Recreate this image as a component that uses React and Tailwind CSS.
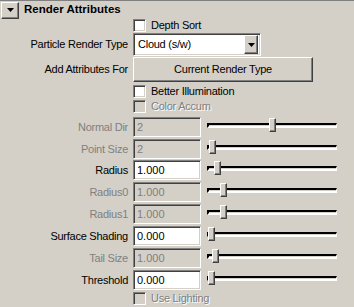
import React from "react";

const font = { fontFamily: '"Liberation Sans", Arial, sans-serif' };

function Sunken({ className = "", children }) {
  return (
    <div
      className={
        "box-border border border-t-[#808080] border-l-[#808080] border-b-white border-r-white shadow-[inset_1px_1px_0_#404040,inset_-1px_-1px_0_#d4d0c8] " +
        className
      }
    >
      {children}
    </div>
  );
}

function Raised({ className = "", children }) {
  return (
    <div
      className={
        "box-border border border-t-white border-l-white border-b-[#404040] border-r-[#404040] shadow-[inset_-1px_-1px_0_#808080,inset_1px_1px_0_#d4d0c8] bg-[#d4d0c8] " +
        className
      }
    >
      {children}
    </div>
  );
}

function Check({ label, disabled, mt }) {
  return (
    <div className={"flex h-[13px] items-center " + mt}>
      <div className="w-[133px] shrink-0" />
      <Sunken className={"h-[13px] w-[13px] " + (disabled ? "bg-[#d4d0c8]" : "bg-white")} />
      <span
        className={
          "ml-[5px] text-[11px] leading-none tracking-[-0.25px] " +
          (disabled ? "text-[#808080] [text-shadow:1px_1px_0_#ffffff]" : "text-black")
        }
      >
        {label}
      </span>
    </div>
  );
}

function Slider({ pos }) {
  return (
    <div className="relative ml-[6px] h-[20px] w-[130px]">
      <div className="absolute left-0 top-[6px] box-border h-[5px] w-[130px] border-l-2 border-t-2 border-l-black border-t-black border-b-2 border-b-white border-r border-r-white" />
      <div
        className="absolute top-[1px] box-border h-[14px] w-[7px] border border-t-white border-l-white border-b-[#404040] border-r-[#404040] bg-[#d4d0c8] shadow-[inset_-1px_-1px_0_#808080]"
        style={{ left: pos }}
      />
    </div>
  );
}

function FieldRow({ label, value, disabled, pos, mt }) {
  return (
    <div className={"flex h-[20px] items-center " + mt}>
      <div
        className={
          "w-[128px] shrink-0 text-right text-[11px] leading-none tracking-[-0.25px] " +
          (disabled ? "text-[#808080]" : "text-black")
        }
      >
        {label}
      </div>
      <Sunken
        className={
          "ml-[5px] flex h-[20px] w-[68px] items-center pl-[3px] text-[11px] leading-none " +
          (disabled ? "bg-[#d4d0c8] text-[#808080]" : "bg-white text-black")
        }
      >
        {value}
      </Sunken>
      <Slider pos={pos} />
    </div>
  );
}

export default function App() {
  return (
    <div className="h-[307px] w-[354px] overflow-hidden bg-[#d4d0c8]" style={font}>
      {/* Header */}
      <div className="flex h-[19px] items-center border-t border-t-[#808080]">
        <Raised className="ml-[1px] flex h-[17px] w-[18px] items-center justify-center">
          <svg width="7" height="4" viewBox="0 0 7 4">
            <polygon points="0,0 7,0 3.5,4" fill="black" />
          </svg>
        </Raised>
        <span className="ml-[5px] text-[11.5px] font-bold leading-none text-black">Render Attributes</span>
      </div>

      <Check label="Depth Sort" mt="mt-0" />

      {/* Particle Render Type */}
      <div className="mt-[1px] flex h-[23px] items-center">
        <div className="w-[128px] shrink-0 text-right text-[11px] leading-none tracking-[-0.25px] text-black">
          Particle Render Type
        </div>
        <Sunken className="ml-[5px] flex h-[23px] w-[128px] items-center justify-between bg-white pl-[4px] pr-[2px]">
          <span className="text-[11px] leading-none tracking-[-0.25px] text-black">Cloud (s/w)</span>
          <Raised className="flex h-[19px] w-[14px] items-center justify-center">
            <svg width="7" height="4" viewBox="0 0 7 4">
              <polygon points="0,0 7,0 3.5,4" fill="black" />
            </svg>
          </Raised>
        </Sunken>
      </div>

      {/* Add Attributes For */}
      <div className="mt-[1px] flex h-[25px] items-center">
        <div className="w-[128px] shrink-0 text-right text-[11px] leading-none tracking-[-0.25px] text-black">
          Add Attributes For
        </div>
        <Raised className="ml-[5px] flex h-[25px] w-[180px] items-center justify-center">
          <span className="text-[11px] leading-none tracking-[-0.25px] text-black">Current Render Type</span>
        </Raised>
      </div>

      <Check label="Better Illumination" mt="mt-[3px]" />
      <Check label="Color Accum" disabled mt="mt-[2px]" />

      <FieldRow label="Normal Dir" value="2" disabled pos={62} mt="mt-[4px]" />
      <FieldRow label="Point Size" value="2" disabled pos={2} mt="mt-[2px]" />
      <FieldRow label="Radius" value="1.000" pos={7} mt="mt-[1px]" />
      <FieldRow label="Radius0" value="1.000" disabled pos={13} mt="mt-[2px]" />
      <FieldRow label="Radius1" value="1.000" disabled pos={13} mt="mt-[2px]" />
      <FieldRow label="Surface Shading" value="0.000" pos={1} mt="mt-[2px]" />
      <FieldRow label="Tail Size" value="1.000" disabled pos={5} mt="mt-[2px]" />
      <FieldRow label="Threshold" value="0.000" pos={1} mt="mt-[2px]" />

      <Check label="Use Lighting" disabled mt="mt-[2px]" />
    </div>
  );
}
